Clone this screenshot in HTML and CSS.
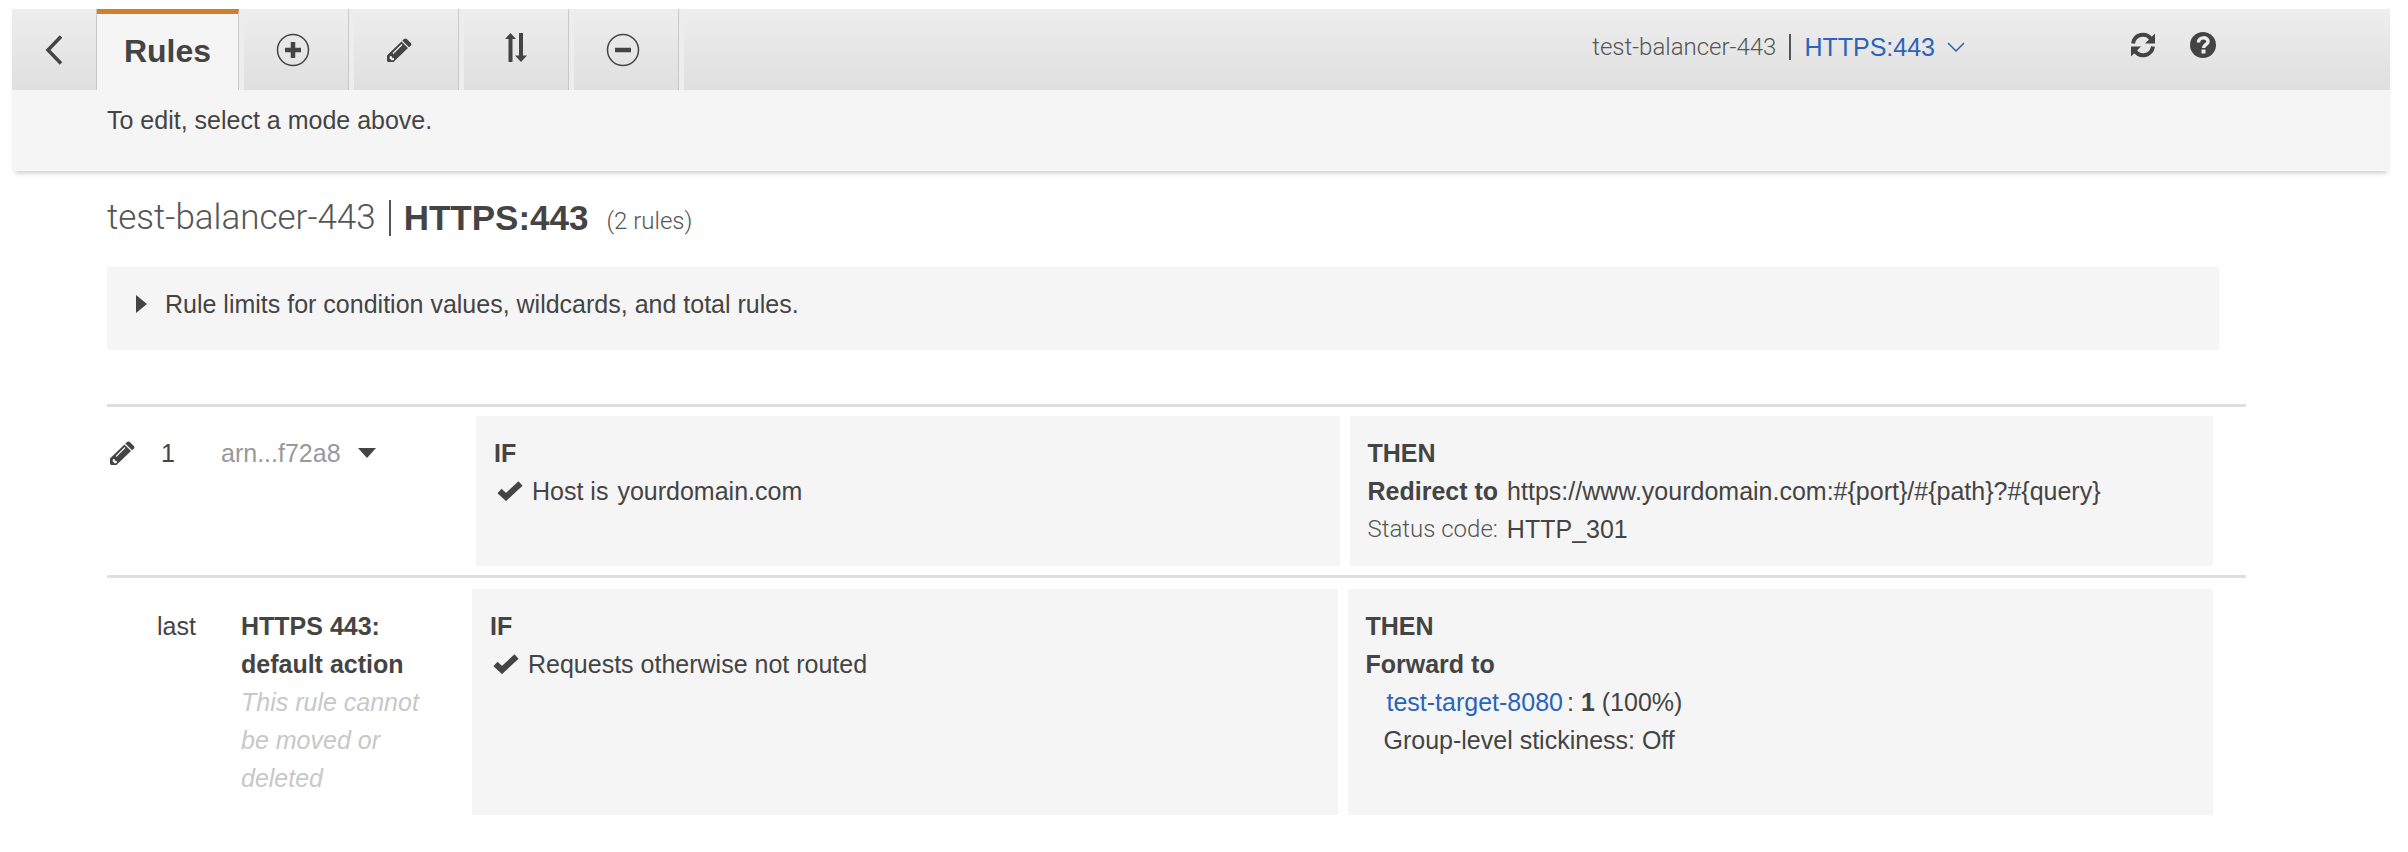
FILE: index.html
```html
<!DOCTYPE html>
<html lang="en">
<head>
<meta charset="utf-8">
<title>Rules</title>
<link rel="stylesheet" href="styles.css">
</head>
<body>
<svg class="defs" aria-hidden="true">
  <symbol id="pencil" viewBox="0 0 26 26">
    <path fill="currentColor" d="M15.500 4.500 2.500 17 1 18.500V24l1 1h5.500l1.500-1.500L22 11zM18 2c.8-.8 2-.8 2.800 0l4 4c.8.800.8 2 0 2.800l-1.800 1.400-6.700-6.700z"/>
    <path d="M7 16.500 16 7.500" stroke="#f0f0f0" stroke-width="1.300"/>
    <path fill="#f0f0f0" d="m4 19 1.800.3.300 1.500 1.700.3.200 1.700-2.200.7-2.300-2.300z"/>
  </symbol>
  <symbol id="check" viewBox="0 0 26 20">
    <path fill="none" stroke="currentColor" stroke-width="6" d="m2.500 10 6.500 6L23.500 2.500"/>
  </symbol>
</svg>
<header class="top">
  <nav class="toolbar" aria-label="Rule modes">
    <button class="back" aria-label="Back"><svg width="18" height="30" viewBox="0 0 18 30"><path d="M16 1.500 3 15l13 13.500" fill="none" stroke="currentColor" stroke-width="3.500"/></svg></button>
    <button class="tab tab-active">Rules</button>
    <button class="tab" aria-label="Add rule"><svg width="34" height="34" viewBox="0 0 34 34"><circle cx="17" cy="17" r="15.500" fill="none" stroke="currentColor" stroke-width="1.500"/><path d="M17 9v16M9 17h16" stroke="currentColor" stroke-width="4.500"/></svg></button>
    <button class="tab" aria-label="Edit rules"><svg class="tab-pencil" width="26" height="26"><use href="#pencil"/></svg></button>
    <button class="tab tab-move" aria-label="Reorder rules"><svg width="24" height="32" viewBox="0 0 24 32"><path fill="currentColor" d="M6.500 1 12 7H8.500v23h-4V7H1zM15 1h4v22.500h4L17 30l-6-6.500h4z"/></svg></button>
    <button class="tab" aria-label="Delete rules"><svg width="34" height="34" viewBox="0 0 34 34"><circle cx="17" cy="17" r="15.500" fill="none" stroke="currentColor" stroke-width="1.500"/><path d="M9 17h16" stroke="currentColor" stroke-width="4.500"/></svg></button>
    <div class="context">
      <span class="light">test-balancer-443</span>
      <span class="bar"></span>
      <button class="listener">HTTPS:443<svg width="18" height="10" viewBox="0 0 18 10"><path d="m1 1 8 8 8-8" fill="none" stroke="currentColor" stroke-width="1.500"/></svg></button>
    </div>
    <button class="tool" aria-label="Refresh"><svg width="26" height="26" viewBox="0 0 26 26"><g fill="none" stroke="currentColor" stroke-width="4"><path d="M3 11.500C4.500 2 16 0 21 7"/><path d="M23 14.500C21.500 24 10 26 5 19"/></g><path fill="currentColor" d="M25 1.500v10H15zM1 24.500v-10h10z"/></svg></button>
    <button class="tool" aria-label="Help"><svg width="26" height="26" viewBox="0 0 26 26"><circle cx="13" cy="13" r="13" fill="currentColor"/><path d="M8.500 10.500c0-6 9.500-6 9.500-1 0 3.500-4.500 3-4.500 6.500" fill="none" stroke="#eee" stroke-width="3.500"/><path fill="#eee" d="M11.500 17.500h4v4h-4z"/></svg></button>
  </nav>
  <p class="hint">To edit, select a mode above.</p>
</header>
<main class="content">
  <h1 class="title"><span class="light">test-balancer-443</span><span class="bar bar-title"></span>HTTPS:443<span class="count light">(2 rules)</span></h1>
  <button class="limits"><svg width="11" height="18" viewBox="0 0 11 18"><path fill="currentColor" d="M0 0 11 9 0 18z"/></svg>Rule limits for condition values, wildcards, and total rules.</button>
  <section class="rule">
    <div class="info">
      <button class="edit" aria-label="Edit rule 1"><svg width="26" height="26"><use href="#pencil"/></svg></button>
      <span class="order">1</span>
      <button class="arn">arn...f72a8<svg width="18" height="10" viewBox="0 0 18 10"><path fill="#444" d="M0 0h18L9 10z"/></svg></button>
    </div>
    <div class="box">
      <h2>IF</h2>
      <p class="condition"><svg width="26" height="20"><use href="#check"/></svg><span>Host is</span><span>yourdomain.com</span></p>
    </div>
    <div class="box">
      <h2>THEN</h2>
      <p class="pair"><b>Redirect to</b><span>https://www.yourdomain.com:#{port}/#{path}?#{query}</span></p>
      <p class="pair"><span class="light status">Status code:</span><span>HTTP_301</span></p>
    </div>
  </section>
  <section class="rule rule-last">
    <div class="info">
      <span class="last">last</span>
      <p class="default"><b>HTTPS 443: default action</b><br><i>This rule cannot be moved or deleted</i></p>
    </div>
    <div class="box">
      <h2>IF</h2>
      <p class="condition"><svg width="26" height="20"><use href="#check"/></svg><span>Requests otherwise not routed</span></p>
    </div>
    <div class="box">
      <h2>THEN</h2>
      <p><b>Forward to</b></p>
      <p class="target"><a href="#target">test-target-8080</a><span>: <b>1</b> (100%)</span></p>
      <p class="sticky">Group-level stickiness: Off</p>
    </div>
  </section>
</main>
</body>
</html>
```
FILE: styles.css
```css
* { box-sizing: border-box; }
body {
  margin: 0;
  padding: 9px 18px 0 12px;
  background: #fff;
  color: #444;
  font: 25px/38px "Liberation Sans", Arial, sans-serif;
}
h1, h2, p { margin: 0; font-size: inherit; }
button {
  margin: 0;
  padding: 0;
  border: 0;
  background: none;
  color: inherit;
  font: inherit;
  text-align: left;
  cursor: pointer;
}
svg { display: block; flex: none; }
a { color: #2b63ba; text-decoration: none; }
.defs { position: absolute; width: 0; height: 0; }
.light { font-family: Roboto, sans-serif; font-weight: 300; color: #555; }

.top { background: #f5f5f5; box-shadow: 0 5px 5px -3px #ccc; }
.toolbar {
  display: flex;
  height: 81px;
  padding-right: 174px;
  background: linear-gradient(#eee, #dfdfdf);
}
.back {
  width: 85px;
  padding: 0 0 0 33px;
  border-right: 1px solid #c8c8c8;
}
.tab {
  display: flex;
  align-items: center;
  justify-content: center;
  width: 110px;
  border-left: 5px solid #ededed;
  border-right: 1px solid #c8c8c8;
  padding-right: 6px;
}
.tab-active {
  width: 142px;
  padding: 0 0 2px;
  border-top: 5px solid #d17f2f;
  border-left: 0;
  background: #f5f5f5;
  font-size: 32px;
  font-weight: bold;
}
.tab-pencil { margin-right: 8px; }
.tab-move { padding: 0 0 4px; }
.context {
  display: flex;
  flex: 1;
  align-items: center;
  justify-content: flex-end;
  height: 81px;
  padding-bottom: 5px;
  border-left: 5px solid #ededed;
}
.context .light { font-size: 24px; }
.bar {
  width: 2px;
  height: 26px;
  margin: 0 13px;
  background: #555;
}
.listener {
  display: flex;
  align-items: center;
  gap: 12px;
  color: #2b63ba;
}
.tool { height: 72px; margin-left: 34px; }
.context + .tool { margin-left: 165px; }
.hint { padding: 11px 95px 32px; }

.content { padding: 23px 144px 0 95px; }
.title {
  display: flex;
  align-items: center;
  font-size: 35px;
  line-height: 48px;
}
.bar-title { height: 36px; }
.count { margin: 6px 0 0 18px; font-size: 24px; line-height: 38px; }
.limits {
  display: flex;
  align-items: center;
  gap: 18px;
  width: calc(100% - 27px);
  margin: 25px 0 54px;
  padding: 18px 29px 27px;
  background: #f5f5f5;
}
.rule {
  display: grid;
  grid-template-columns: 359px 1fr 1fr;
  column-gap: 10px;
  padding: 9px 33px 9px 0;
  border-top: 3px solid #dfdfdf;
}
.rule-last {
  grid-template-columns: 355px 1fr 1fr;
  padding-top: 11px;
}
.info { display: flex; padding: 18px 0; }
.edit { width: 54px; height: 38px; padding-left: 2px; }
.order { width: 60px; }
.arn {
  display: flex;
  align-items: center;
  gap: 17px;
  height: 38px;
  color: #999;
}
.last { width: 134px; padding-left: 50px; }
.default { width: 190px; }
.default i { color: #c8c8c8; }
.box { padding: 18px 18px; background: #f5f5f5; }
.condition { display: flex; align-items: center; gap: 9px; padding-left: 3px; }
.pair { display: flex; gap: 9px; }
.status { font-size: 24px; }
.target { display: flex; gap: 4px; padding-left: 21px; }
.sticky { padding-left: 18px; }
```
